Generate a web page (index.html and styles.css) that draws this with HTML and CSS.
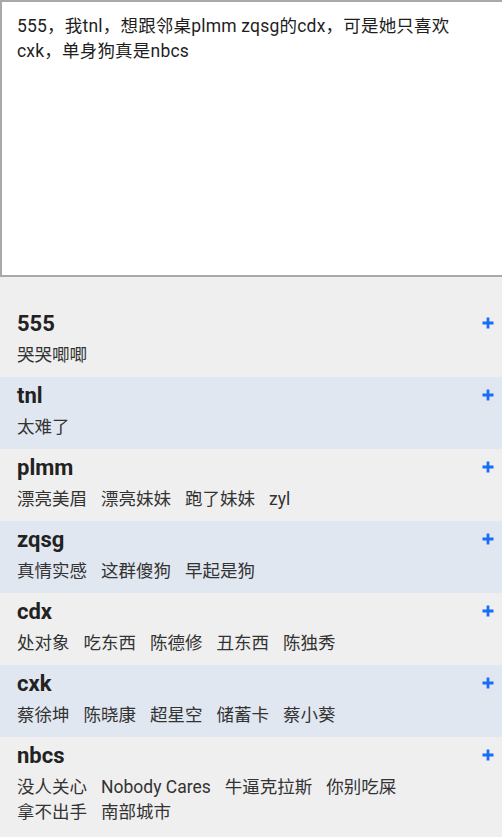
FILE: index.html
```html
<!DOCTYPE html>
<html lang="zh-CN">
<head>
  <meta charset="UTF-8">
  <meta name="viewport" content="width=device-width, initial-scale=1.0">
  <link rel="stylesheet" href="styles.css">
  <title>缩写翻译</title>
</head>
<body>
  <textarea id="entrada" class="entrada">555，我tnl，想跟邻桌plmm zqsg的cdx，可是她只喜欢cxk，单身狗真是nbcs</textarea>

  <ul class="lista">
    <li class="item">
      <div class="item-topo">
        <span class="sigla">555</span>
        <button class="mais" type="button"><svg viewBox="0 0 12 12" width="12" height="12"><path d="M6 0.5v11M0.5 6h11" stroke="currentColor" stroke-width="2.8"/></svg></button>
      </div>
      <div class="tags"><span>哭哭唧唧</span></div>
    </li>
    <li class="item">
      <div class="item-topo">
        <span class="sigla">tnl</span>
        <button class="mais" type="button"><svg viewBox="0 0 12 12" width="12" height="12"><path d="M6 0.5v11M0.5 6h11" stroke="currentColor" stroke-width="2.8"/></svg></button>
      </div>
      <div class="tags"><span>太难了</span></div>
    </li>
    <li class="item">
      <div class="item-topo">
        <span class="sigla">plmm</span>
        <button class="mais" type="button"><svg viewBox="0 0 12 12" width="12" height="12"><path d="M6 0.5v11M0.5 6h11" stroke="currentColor" stroke-width="2.8"/></svg></button>
      </div>
      <div class="tags"><span>漂亮美眉</span><span>漂亮妹妹</span><span>跑了妹妹</span><span>zyl</span></div>
    </li>
    <li class="item">
      <div class="item-topo">
        <span class="sigla">zqsg</span>
        <button class="mais" type="button"><svg viewBox="0 0 12 12" width="12" height="12"><path d="M6 0.5v11M0.5 6h11" stroke="currentColor" stroke-width="2.8"/></svg></button>
      </div>
      <div class="tags"><span>真情实感</span><span>这群傻狗</span><span>早起是狗</span></div>
    </li>
    <li class="item">
      <div class="item-topo">
        <span class="sigla">cdx</span>
        <button class="mais" type="button"><svg viewBox="0 0 12 12" width="12" height="12"><path d="M6 0.5v11M0.5 6h11" stroke="currentColor" stroke-width="2.8"/></svg></button>
      </div>
      <div class="tags"><span>处对象</span><span>吃东西</span><span>陈德修</span><span>丑东西</span><span>陈独秀</span></div>
    </li>
    <li class="item">
      <div class="item-topo">
        <span class="sigla">cxk</span>
        <button class="mais" type="button"><svg viewBox="0 0 12 12" width="12" height="12"><path d="M6 0.5v11M0.5 6h11" stroke="currentColor" stroke-width="2.8"/></svg></button>
      </div>
      <div class="tags"><span>蔡徐坤</span><span>陈晓康</span><span>超星空</span><span>储蓄卡</span><span>蔡小葵</span></div>
    </li>
    <li class="item">
      <div class="item-topo">
        <span class="sigla">nbcs</span>
        <button class="mais" type="button"><svg viewBox="0 0 12 12" width="12" height="12"><path d="M6 0.5v11M0.5 6h11" stroke="currentColor" stroke-width="2.8"/></svg></button>
      </div>
      <div class="tags"><span>没人关心</span><span>Nobody Cares</span><span>牛逼克拉斯</span><span>你别吃屎</span><span>拿不出手</span><span>南部城市</span></div>
    </li>
  </ul>
</body>
</html>
```

FILE: styles.css
```css
body {
  font-family: Roboto, "Noto Sans CJK SC", sans-serif;
  margin: 0;
  padding: 0;
  background-color: #efefef;
  color: #222;
}

.entrada {
  display: block;
  width: 100%;
  height: 277px;
  margin: 0;
  padding: 12px 15px;
  box-sizing: border-box;
  border: 2px solid #a9a9a9;
  border-right: 0;
  background-color: #fff;
  font-family: Roboto, "Noto Sans CJK SC", sans-serif;
  font-size: 17.5px;
  line-height: 25px;
  letter-spacing: 0.2px;
  color: #1e1e1e;
  resize: none;
  outline: none;
}

.lista {
  list-style: none;
  margin: 0;
  padding: 28px 0 0;
}

.item {
  padding: 4px 8px 9px 17px;
}

.item:nth-child(even) {
  background-color: #e1e7f0;
}

.item-topo {
  display: flex;
  align-items: center;
  justify-content: space-between;
  height: 28px;
}

.sigla {
  font-size: 22px;
  font-weight: bold;
  color: #222;
}

.mais {
  display: flex;
  padding: 0;
  border: none;
  background: none;
  color: #1a6ef5;
  cursor: pointer;
}

.tags {
  display: flex;
  flex-wrap: wrap;
  column-gap: 14px;
  margin-top: 6px;
  padding-right: 22px;
  font-size: 17.5px;
  line-height: 25px;
  color: #333;
}
```
